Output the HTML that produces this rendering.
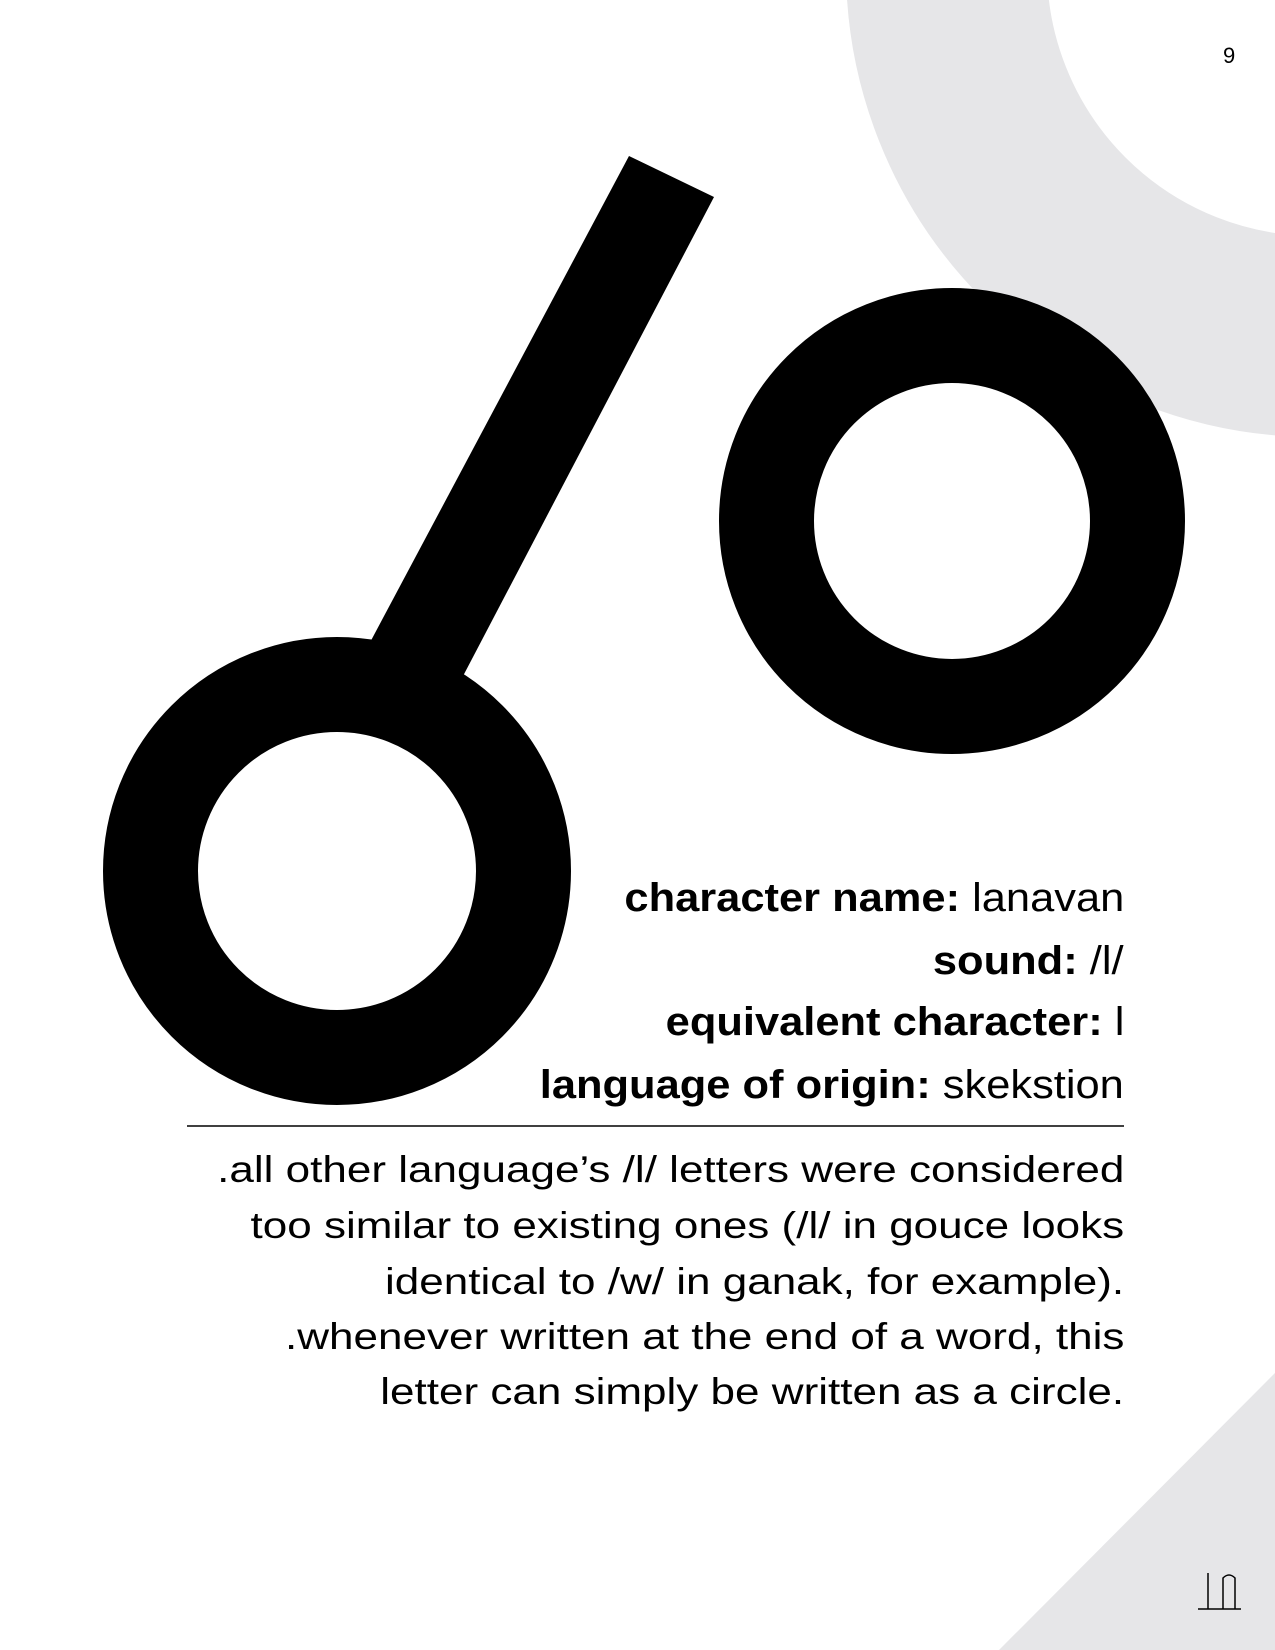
<!DOCTYPE html>
<html><head><meta charset="utf-8"><style>
html,body{margin:0;padding:0;background:#fff}
body{width:1275px;height:1650px;position:relative;overflow:hidden;font-family:"Liberation Sans",sans-serif;color:#000}
svg{position:absolute;left:0;top:0}
.h{position:absolute;right:151px;font-size:40px;white-space:nowrap;line-height:1;transform:scaleX(1.086);transform-origin:right center}
.h b{font-weight:bold}
.p{position:absolute;right:151px;font-size:37px;white-space:nowrap;line-height:1;transform:scaleX(1.19);transform-origin:right center}
.num{position:absolute;left:1223px;top:43px;font-size:22px}
</style></head><body>
<svg width="1275" height="1650" viewBox="0 0 1275 1650">
<circle cx="1315" cy="-32" r="368.5" fill="none" stroke="#e6e6e8" stroke-width="201"/>
<polygon points="1275,1373 999,1650 1275,1650" fill="#e6e6e8"/>
<polygon points="629,156 714,197 440,720 350,680" fill="#000"/>
<circle cx="337" cy="871" r="186.5" fill="none" stroke="#000" stroke-width="95"/>
<circle cx="952" cy="521" r="185.5" fill="none" stroke="#000" stroke-width="95"/>
<line x1="187" y1="1126" x2="1124" y2="1126" stroke="#000" stroke-width="1.5"/>
<g fill="none" stroke="#000" stroke-width="1.5">
<line x1="1198" y1="1609" x2="1241" y2="1609"/>
<line x1="1208" y1="1573" x2="1208" y2="1609"/>
<path d="M1223 1609 V1578 Q1229 1572 1235 1578 V1609"/>
</g>
</svg>
<div class="num">9</div>
<div class="h" style="top:878px"><b>character name:</b> lanavan</div>
<div class="h" style="top:941px"><b>sound:</b> /l/</div>
<div class="h" style="top:1002px"><b>equivalent character:</b> l</div>
<div class="h" style="top:1065px"><b>language of origin:</b> skekstion</div>
<div class="p" style="top:1151px">.all other language’s /l/ letters were considered</div>
<div class="p" style="top:1207px">too similar to existing ones (/l/ in gouce looks</div>
<div class="p" style="top:1263px">identical to /w/ in ganak, for example).</div>
<div class="p" style="top:1318px">.whenever written at the end of a word, this</div>
<div class="p" style="top:1373px">letter can simply be written as a circle.</div>
</body></html>
